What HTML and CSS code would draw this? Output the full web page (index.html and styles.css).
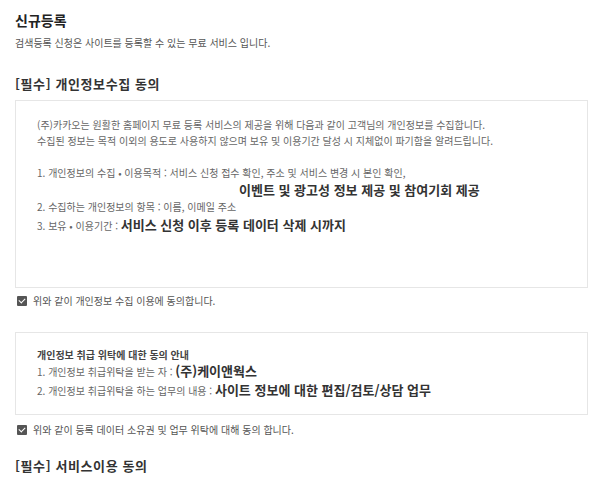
FILE: index.html
```html
<!DOCTYPE html>
<html lang="ko">

<head>
	<meta charset="UTF-8">
	<title>신규등록</title>
	<link rel="stylesheet" href="styles.css">
</head>

<body>
	<div class="wrap">
		<h1 class="title">신규등록</h1>
		<p class="desc">검색등록 신청은 사이트를 등록할 수 있는 무료 서비스 입니다.</p>

		<h2 class="sect">[필수] 개인정보수집 동의</h2>
		<div class="terms terms-privacy">
			<p>(주)카카오는 원활한 홈페이지 무료 등록 서비스의 제공을 위해 다음과 같이 고객님의 개인정보를 수집합니다.</p>
			<p>수집된 정보는 목적 이외의 용도로 사용하지 않으며 보유 및 이용기간 달성 시 지체없이 파기함을 알려드립니다.</p>
			<p class="gap">1. 개인정보의 수집 • 이용목적 : 서비스 신청 접수 확인, 주소 및 서비스 변경 시 본인 확인,</p>
			<p class="em indent">이벤트 및 광고성 정보 제공 및 참여기회 제공</p>
			<p>2. 수집하는 개인정보의 항목 : 이름, 이메일 주소</p>
			<p class="row-em">3. 보유 • 이용기간 : <b class="em">서비스 신청 이후 등록 데이터 삭제 시까지</b></p>
		</div>
		<label class="agree agree-first"><span class="chk"></span>위와 같이 개인정보 수집 이용에 동의합니다.</label>

		<div class="terms terms-trust">
			<p class="strong">개인정보 취급 위탁에 대한 동의 안내</p>
			<p>1. 개인정보 취급위탁을 받는 자 : <b class="em">(주)케이앤웍스</b></p>
			<p class="row-em">2. 개인정보 취급위탁을 하는 업무의 내용 : <b class="em">사이트 정보에 대한 편집/검토/상담 업무</b></p>
		</div>
		<label class="agree"><span class="chk"></span>위와 같이 등록 데이터 소유권 및 업무 위탁에 대해 동의 합니다.</label>

		<h2 class="sect sect-last">[필수] 서비스이용 동의</h2>
	</div>
</body>

</html>
```

FILE: styles.css
```css
body {
	margin: 0;
	color: #666;
	background-color: #fff;
	font: 10px "Noto Sans CJK KR", "Noto Sans", sans-serif;
}

.wrap {
	padding: 8px 12px 0 15px;
}

.title {
	margin: 0;
	font-size: 14px;
	line-height: 24px;
	font-weight: 700;
	color: #222;
}

.desc {
	margin: 3px 0 0;
	line-height: 16px;
	color: #555;
}

.sect {
	margin: 24px 0 0;
	font-size: 13px;
	line-height: 18px;
	font-weight: 700;
	letter-spacing: 0.6px;
	color: #333;
}

.terms {
	box-sizing: border-box;
	margin-top: 7px;
	padding: 16px 20px 0 21px;
	border: 1px solid #e6e6e6;
}

.terms p {
	margin: 0;
	line-height: 16px;
}

.terms-privacy {
	height: 188px;
}

.terms-trust {
	height: 83px;
	margin-top: 23px;
	padding-top: 14px;
}

.terms p.gap {
	margin-top: 16px;
}

.em {
	font-size: 13px;
	font-weight: 700;
	color: #333;
}

.terms p.em,
.terms p.row-em {
	line-height: 18px;
}

.terms p.row-em:last-child {
	margin-top: 1px;
}

.indent {
	padding-left: 202px;
}

.strong {
	font-weight: 700;
	color: #444;
}

.agree {
	display: flex;
	align-items: center;
	margin-top: 7px;
	padding-left: 2px;
	line-height: 16px;
	color: #555;
}

.agree-first {
	margin-top: 5px;
}

.chk {
	width: 10px;
	height: 10px;
	margin-right: 6px;
	border-radius: 1px;
	background: #555;
	position: relative;
}

.chk::after {
	content: "";
	position: absolute;
	left: 3px;
	top: 1px;
	width: 3px;
	height: 5px;
	border: solid #fff;
	border-width: 0 1.5px 1.5px 0;
	transform: rotate(45deg);
}

.sect-last {
	margin-top: 19px;
}
```
